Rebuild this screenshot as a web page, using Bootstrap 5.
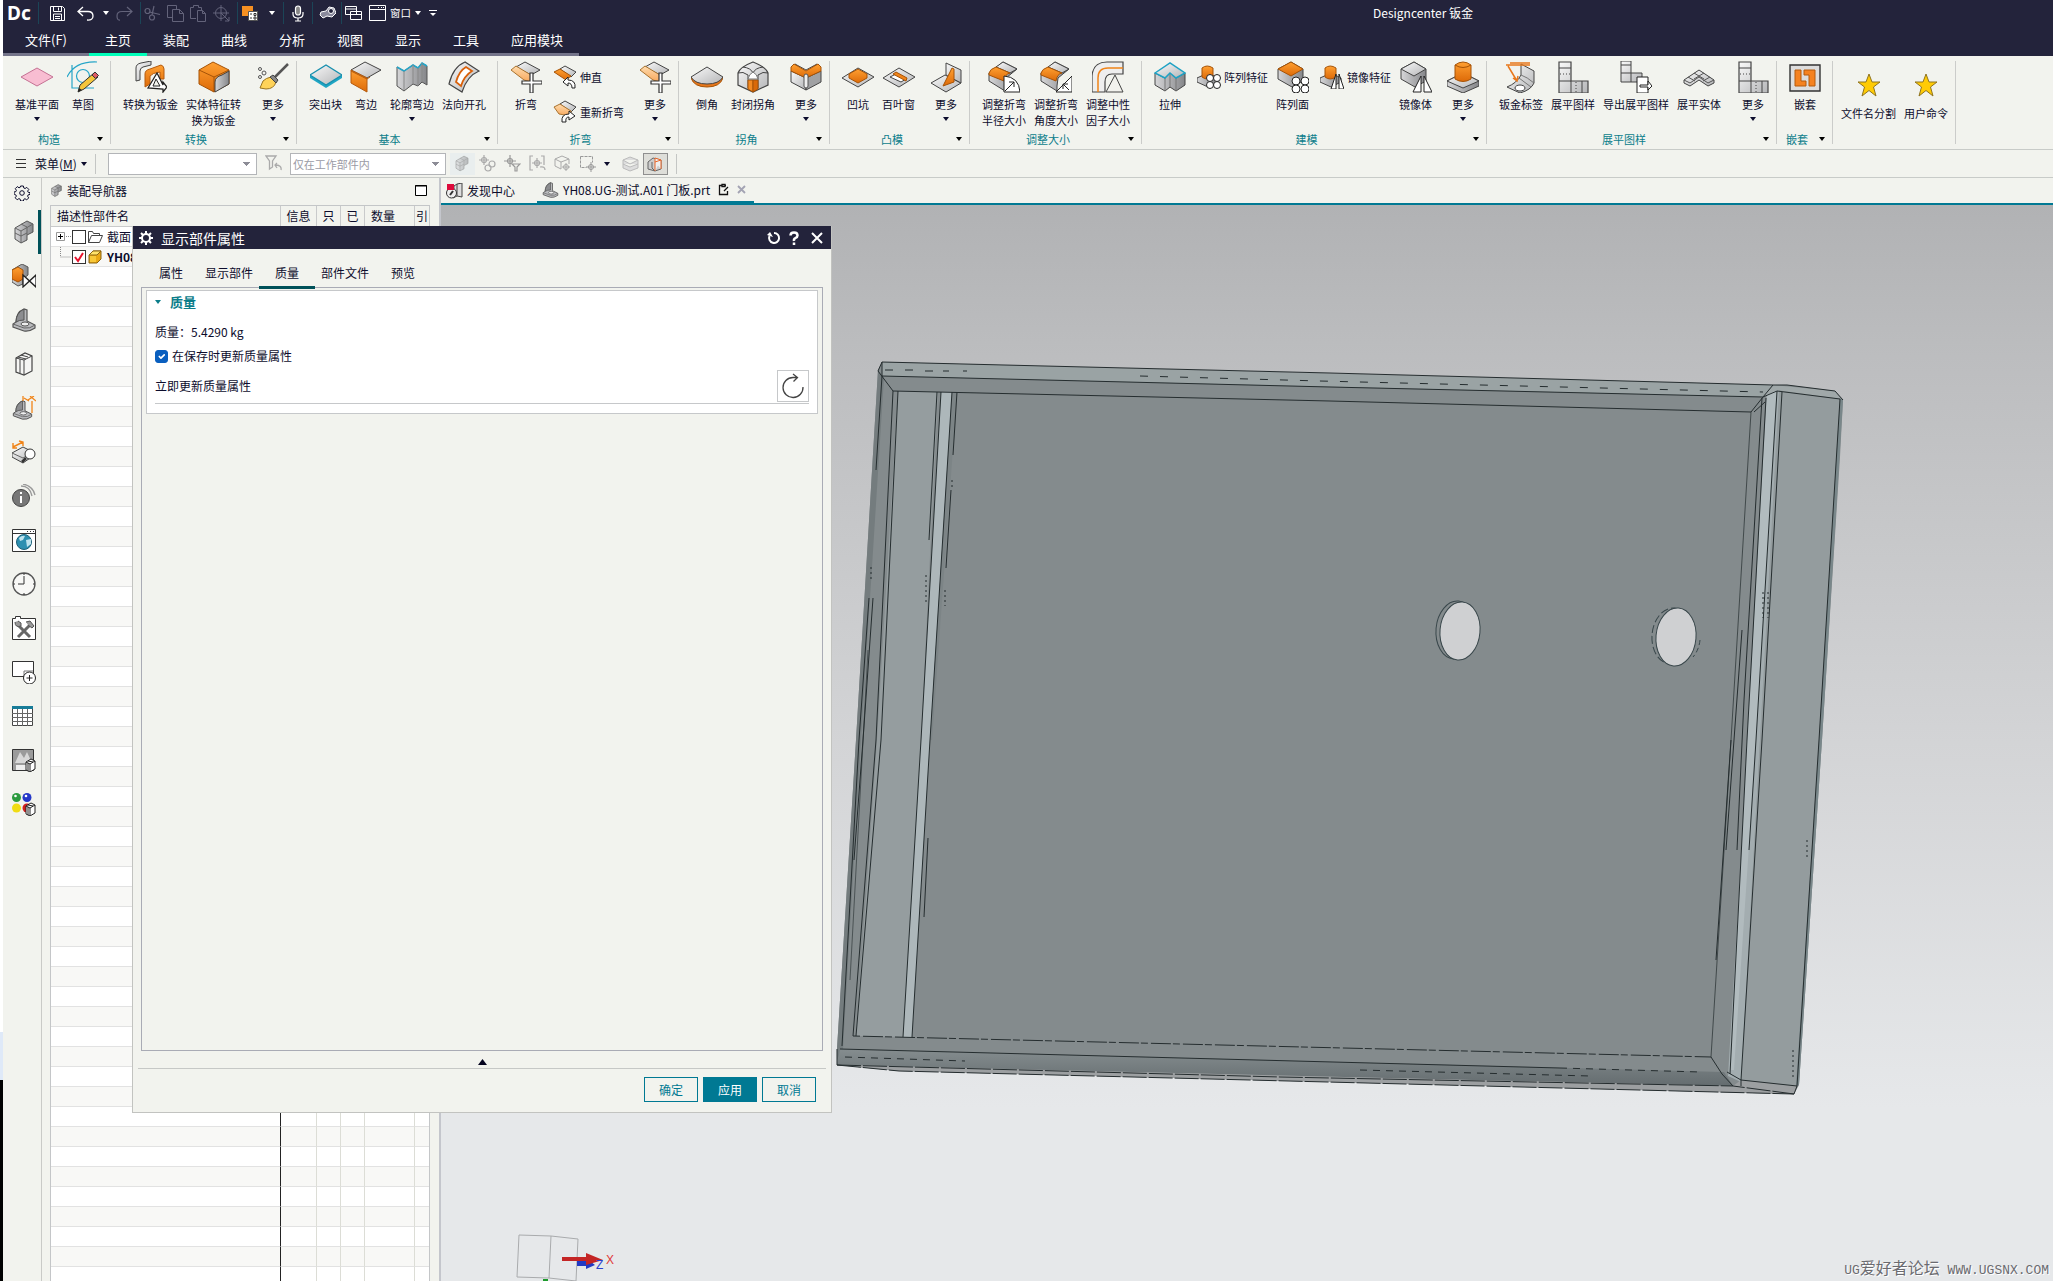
<!DOCTYPE html>
<html lang="zh-CN">
<head>
<meta charset="utf-8">
<meta name="viewport" content="width=device-width, initial-scale=1">
<title>Designcenter 钣金</title>
<link rel="stylesheet" href="https://cdn.jsdelivr.net/npm/bootstrap@5.3.0/dist/css/bootstrap.min.css">
<style>
:root{--navy:#23233b;--teal:#007993;--deep:#005159;--panel:#f2f3ee;--ink:#0c0c2c;--rule:#c8cbc8}
html,body{height:100%}
body{font-family:"Noto Sans CJK SC","Noto Sans",sans-serif;font-size:12px;line-height:16px;color:var(--ink);background:var(--panel);overflow:hidden}
svg{display:block;flex:none}
button{font:inherit;color:inherit;background:none;border:0;padding:0}
.edge{width:3px;background:linear-gradient(#fff 0 1032px,#dfe9f8 1032px 1080px,#000 1080px)}
.tri{display:inline-block;width:0;height:0;border:3px solid transparent;border-top:4px solid currentColor;border-bottom:0;flex:none}
.topbar{background:var(--navy);color:#fff}
.quick{height:26px;padding-left:4px}
.logo{font:700 19px/26px "Noto Sans",sans-serif;width:31px}
.quick .vr-q{width:1px;height:22px;background:#1b4557}
.quick button{height:24px;display:flex;align-items:center;justify-content:center}
.off{color:#63637a}
.q23{width:23px}.q30{width:28px}.q14{width:14px}
.wtitle{left:1370px;top:0;line-height:26px}
.menu-tab{height:30px;padding:0 16px;font-size:13px;color:#fff;border-bottom:3px solid #74748a !important;line-height:28px}
.menu-tab.first-tab{width:86px}
.menu-tab.on{border-bottom-color:#00ffb9 !important}
.ribbon{height:94px;border-bottom:1px solid var(--rule);font-size:11px}
.rgroup{position:relative;display:flex;flex-direction:column;padding:5px 0 0}
.rgroup::after{content:"";position:absolute;right:0;top:5px;bottom:5px;width:1px;background:#cbccca}
.rbody{display:flex;padding:0 8px;height:70px}
.rbody.tight{padding-right:4px}
.rbtn{min-width:40px;padding:0 4px;display:flex;flex-direction:column;align-items:center;text-align:center}
.rbtn svg{margin-bottom:3px}
.rbtn .tri{margin-top:5px}
.more{margin-left:7px}
.more.far{margin-left:8px}
.rsmall{display:flex;align-items:center;gap:3px;padding:0 4px 0 7px;height:31px}
.rlabel{display:flex;align-items:center;height:16px;color:#0b7d8a;font-size:11px}
.rlabel span{flex:1;text-align:center}
.rlabel button{width:16px;color:#000;display:flex;padding-left:2px}
.tools{height:28px;border-bottom:1px solid var(--rule);padding-left:12px}
.combo{appearance:none;height:22px;border:1px solid #b3b5b8;border-radius:0;padding:0 2px;font-size:11px;line-height:18px;color:#9b9ba5;opacity:1;background:linear-gradient(to bottom right,#8c8c96 50%,transparent 50%) right 5px center/4px 4px no-repeat,linear-gradient(to bottom left,#8c8c96 50%,transparent 50%) right 9px center/4px 4px no-repeat,#fff}
.combo.w-type{width:149px;margin-left:12px}.combo.w-scope{width:156px}
.tool{width:25px;height:22px;display:flex;align-items:center;justify-content:center;color:#aaa}
.tool.lit{background:#e9eeee}
.tool.pressed{border:1px solid #8f8f8f;background:#deded9}
.sep{width:1px;height:20px;background:#c4c6c4}
.rail{width:39px;border-right:1px solid #c9cac7;align-items:center;padding-top:3px}
.rail button{height:44px;width:38px;display:flex;align-items:center;justify-content:center;padding-left:4px}
.rail button.gear{height:24px;padding-left:0;margin-bottom:5px}
.rail button.on{box-shadow:inset -3px 0 var(--deep)}
.navp{width:399px;border-right:2px solid #c4c6cc;padding:0 10px 0 8px;overflow:hidden}
.nav-h{height:27px;padding:0 2px 2px 0}
.tree-t{table-layout:fixed;width:380px;border-collapse:separate;border-spacing:0;border:1px solid #c4c6c8;border-width:1px 1px 0}
.tree-t th{height:21px;font-weight:400;padding:0 6px;border-right:1px solid #c9cacb;border-bottom:1px solid #c9cacb;white-space:nowrap;overflow:hidden;background:var(--panel)}
.tree-t th.ctr{text-align:center;padding:0}
.tree-t td{height:20px;padding:0;border-bottom:1px solid #e2e2e2;border-right:1px solid #dcddd6;background:#fff;white-space:nowrap;overflow:hidden}
.tree-t tr:nth-child(even) td{background:#f8f8f6}
.tree-t td:first-child{border-right-color:#222}
.tree-t td:last-child,.tree-t th:last-child{border-right:0}
.tickbox{appearance:none;width:14px;height:14px;border:1px solid #333;background:#fff;margin:0;flex:none}
.plus{width:9px;height:9px;border:1px solid #999}
.doctabs{height:27px;border-bottom:2px solid var(--teal)}
.doctab{height:26px;display:flex;align-items:center;line-height:24px;padding:0 5px;color:var(--ink);text-decoration:none}
.doctab.on{border-bottom:3px solid var(--teal);line-height:22px;margin-left:17px;padding-right:8px}
.scene{background:linear-gradient(#b1b2b4 0,#bcbdbf 14%,#d3d4d6 50%,#e6e8ea 84%);overflow:hidden}
.scene svg{position:absolute;left:0;top:0}
.mark-w{right:4px;bottom:1px;font:13px/18px "Liberation Mono","Noto Sans CJK SC",monospace;color:#6b6b70;text-shadow:1px 1px #fff}
.mark-w b{font:16px/18px "Noto Sans CJK SC",sans-serif}
.dlg{left:129px;top:48px;width:700px;background:var(--panel);border:1px solid #c2c3c0;border-top:0;z-index:5}
.dlg-t{height:23px;background:var(--navy);color:#fff;padding:0 8px 0 6px;font-size:14px;line-height:22px}
.dlg-tabs{height:38px;padding:10px 0 0 15px}
.dlg-tab{padding:0 11px;height:28px;line-height:28px;position:relative;color:var(--ink)}
.dlg-tab.on{line-height:24px}
.dlg-tab.on::after{content:"";position:absolute;left:-5px;right:-5px;bottom:-2px;height:3px;background:var(--deep)}
.frame{margin:0 8px;border:1px solid #a9abb5;min-height:764px;padding:2px 4px}
.sect{background:#fff;border:1px solid #c6c8ca;padding:2px 8px 9px;min-height:122px}
.sect-h{color:#0b7d8a;font-size:13px;line-height:18px;font-weight:700;display:flex;align-items:center;gap:9px;height:18px}
.mass{margin-top:13px}
.keep{min-height:16px;margin:8px 0 4px;padding:0}
.sect .form-check-input{width:13px;height:13px;margin:0;border-radius:3px;float:none}
.form-check-input:checked{background-color:#0a5fbf;border-color:#0a5fbf}
.upd{border-bottom:1px solid #c6c8ca;height:36px}
.refresh{width:32px;height:32px;border:1px solid #c6c8ca !important;display:flex;align-items:center;justify-content:center}
.dlg-f{margin:0 5px;border-top:1px solid #c6c8c6;padding:8px 10px 10px;gap:5px}
.dlg-f .btn{width:54px;height:25px;border:1px solid var(--teal);border-radius:0;padding:0;font-size:12px;line-height:22px;color:var(--teal)}
.dlg-f .btn.prime{background:var(--teal);color:#fff}
</style>
<script src="https://cdn.jsdelivr.net/npm/bootstrap@5.3.0/dist/js/bootstrap.bundle.min.js"></script>
</head>
<body>
<svg width="0" height="0" class="position-absolute" aria-hidden="true">
<defs>
<linearGradient id="o" x1="0" y1="0" x2="0" y2="1"><stop offset="0" stop-color="#ffa032"/><stop offset="1" stop-color="#dd6a08"/></linearGradient>
<linearGradient id="g" x1="0" y1="0" x2="1" y2="1"><stop offset="0" stop-color="#fafafa"/><stop offset="1" stop-color="#b4b5b7"/></linearGradient>
<linearGradient id="d" x1="0" y1="0" x2="1" y2="0"><stop offset="0" stop-color="#d6d6d8"/><stop offset="1" stop-color="#858689"/></linearGradient>
<linearGradient id="lo" x1="0" y1="0" x2="0" y2="1"><stop offset="0" stop-color="#ffdcae"/><stop offset="1" stop-color="#f7a75c"/></linearGradient>
<linearGradient id="mb" x1="0" y1="0" x2="0" y2="1"><stop offset="0" stop-color="#858d8f"/><stop offset="1" stop-color="#646c6f"/></linearGradient>
</defs>
<g stroke-linejoin="round" stroke-linecap="round">
<symbol id="plane" viewBox="0 0 32 32"><path d="M0 16 16 7l16 9-16 9z" fill="#f8bdd2" stroke="#c47193"/></symbol>
<symbol id="sketch" viewBox="0 0 32 32"><g fill="none" stroke="#25a5c8" stroke-width="1.2"><path d="M0 16Q8 0 30 1M5 4v23h22"/><circle cx="16" cy="15" r="6.500"/></g><path d="M11 31l2-7L27 12l4 4-14 12z" fill="#f4c53b" stroke="#333"/><path d="M25 14l3-3 3.500 3.500-3 3z" fill="#dd5b64" stroke="#333"/><path d="M11 31l1-4 3 2z" fill="#222"/></symbol>
<symbol id="conv" viewBox="0 0 32 32"><path d="M1 20V7Q1 3 6 2l10-2v4L8 6Q5 7 5 10v9z" fill="url(#g)" stroke="#444"/><path d="M10 26V13q0-4 5-5l11-4q3 1 3 4v10h-4v-7q-8 1-10 4v8z" fill="url(#o)" stroke="#b55a0c"/><path d="M13 27l9-15 6 12v-3l4 5-4 5v-3z" fill="#fff" stroke="#222" stroke-width="1.300"/><path d="M18 25h7l-4-7z" fill="#f2f3ee" stroke="#222"/></symbol>
<symbol id="solid" viewBox="0 0 32 32"><path d="M1 9 15 1l16 8v14l-15 8-15-8z" fill="url(#o)" stroke="#a65307"/><path d="M1 9l15 7 15-7M16 16v15" fill="none" stroke="#a65307"/><path d="M17 21q0-5 7-7l7-4v13l-14 8z" fill="url(#d)" stroke="#444"/></symbol>
<symbol id="broom" viewBox="0 0 32 32"><path d="M31 3 17 17" stroke="#555" stroke-width="2.500"/><path d="M14 16l5 5q-2 7-10 7l-6-1 3-7q3-3 8-4z" fill="#ffd35a" stroke="#9a7420"/><path d="M13 16l3-2 5 5-2 3z" fill="#888" stroke="#444"/><g fill="none" stroke="#555"><circle cx="3" cy="8" r="1.500"/><circle cx="7" cy="12" r="2"/><circle cx="3" cy="16" r="1.500"/></g></symbol>
<symbol id="slab" viewBox="0 0 32 32"><path d="M0 14v3l16 10 16-10v-3z" fill="#1fa6c4"/><path d="M0 14 16 4l16 10-16 10z" fill="url(#g)" stroke="#168fae" stroke-width="1.300"/></symbol>
<symbol id="flange" viewBox="0 0 32 32"><path d="M15 1l16 8-14 8-16-8z" fill="url(#g)" stroke="#444"/><path d="M1 9l16 8v14L1 22z" fill="url(#o)" stroke="#b55a0c"/><path d="M1 10l16 8 3-2" fill="none" stroke="#b55a0c"/></symbol>
<symbol id="contour" viewBox="0 0 32 32"><path d="M1 6l7 4 9-6 5 3 4-5 5 3v19l-5-3-4 4-5-2-9 7-7-5z" fill="url(#d)" stroke="#555"/><path d="M1 6l7 4 9-6 5 3 4-5 5 3" fill="none" stroke="#25a5c8" stroke-width="1.500"/><path d="M8 10v19M17 4v19M22 7v18M26 2v19" stroke="#888" fill="none"/></symbol>
<symbol id="cutout" viewBox="0 0 32 32"><path d="M1 23Q5 6 17 1l14 9Q19 15 14 31z" fill="url(#g)" stroke="#444" stroke-width="1.200"/><path d="M8 21q3-11 10-15l6 4q-8 5-11 15z" fill="#fff" stroke="#d9600a" stroke-width="1.800"/></symbol>
<symbol id="bend" viewBox="0 0 32 32"><path d="M15 1l15 8-9 5L6 6z" fill="url(#g)" stroke="#444"/><path d="M6 5l15 9v7l-7-2L1 9z" fill="url(#lo)" stroke="#a9732f"/><path d="M20 12h3v8h9v3h-9v9h-3v-9h-8v-3h8z" fill="#fff" stroke="#333" stroke-width="1.200"/></symbol>
<symbol id="unbend" viewBox="0 0 24 24"><path d="M12 1l11 6-5 5L7 4z" fill="url(#g)" stroke="#444"/><path d="M7 4l11 7-5 4L1 7z" fill="url(#o)" stroke="#a65307"/><path d="M22 23q1-8-7-8v-3l-5 5 5 4v-3q4 0 4 5z" fill="#fff" stroke="#222"/></symbol>
<symbol id="rebend" viewBox="0 0 24 24"><path d="M12 1l11 6-5 5L7 4z" fill="url(#g)" stroke="#444"/><path d="M7 4l11 7v5L6 14 1 7z" fill="url(#lo)" stroke="#a9732f"/><path d="M9 22q-1-8 7-8v-3l6 5-6 4v-3q-4 0-3 5z" fill="#fff" stroke="#222"/></symbol>
<symbol id="chamf" viewBox="0 0 32 32"><path d="M0 17q3 9 16 9t16-9l-1-1H1z" fill="#e8771a" stroke="#a65307"/><path d="M0 16 16 6l16 10q-4 7-16 7T0 16z" fill="url(#g)" stroke="#444"/></symbol>
<symbol id="ccorner" viewBox="0 0 32 32"><path d="M1 12Q3 6 16 1q13 5 15 11v12l-15 7-15-7z" fill="url(#g)" stroke="#444" stroke-width="1.200"/><path d="M1 12q5-2 10 2v13M31 12q-5-2-10 2v13M6 6q8 1 10 6M26 6q-8 1-10 6" fill="none" stroke="#444"/><path d="M11 19h5v12l-5-3z" fill="#f38a22" stroke="#a65307"/><path d="M16 19h5v9l-5 3z" fill="#d96908" stroke="#a65307"/><path d="M11 18q1-5 5-7 4 2 5 7z" fill="#fff" stroke="#777"/></symbol>
<symbol id="morec" viewBox="0 0 32 32"><path d="M1 10l15 7v12L1 21z" fill="url(#g)" stroke="#444"/><path d="M31 10l-15 7v12l15-8z" fill="#a0a1a3" stroke="#444"/><path d="M5 3l11 6 11-6-3 5-8 5-8-5z" fill="#eee" stroke="#444"/><path d="M1 6l3-3 12 7 12-7 3 3v4l-15 7-15-7z" fill="url(#o)" stroke="#a65307"/><rect x="14" y="13" width="4" height="14" rx="2" fill="#eee" stroke="#555"/></symbol>
<symbol id="dimple" viewBox="0 0 32 32"><path d="M0 17 16 7l16 9-16 10z" fill="url(#g)" stroke="#444"/><path d="M7 13l9-5 9 5v4l-9 5-9-5z" fill="url(#o)" stroke="#a65307"/></symbol>
<symbol id="louver" viewBox="0 0 32 32"><path d="M0 17 16 7l16 9-16 10z" fill="url(#g)" stroke="#444"/><path d="M7 16l6-3 10 5-5 3z" fill="#fff" stroke="#444"/><path d="M10 13l3-2 11 6-1 3z" fill="#f08419" stroke="#a65307"/></symbol>
<symbol id="gusset" viewBox="0 0 32 32"><path d="M1 22l14-8 16 8-15 9z" fill="url(#g)" stroke="#444"/><path d="M16 2l15 7v13l-15-8z" fill="url(#g)" stroke="#444"/><path d="M13 25 22 7l2 1v13z" fill="url(#o)" stroke="#a65307"/></symbol>
<symbol id="rrad" viewBox="0 0 32 32"><path d="M1 12 15 1l14 7-11 9-1 8 0 5L1 20z" fill="url(#d)" stroke="#444"/><path d="M8 6l7-5 14 7-7 4z" fill="url(#g)" stroke="#444"/><path d="M1 12q1-4 7-6l14 6q-5 1-6 8L1 14z" fill="url(#o)" stroke="#a65307"/><path d="M16 31V15q15 1 16 16z" fill="#fff" stroke="#222"/><path d="M17 30l9-9m-5 0h5v5" fill="none" stroke="#222"/></symbol>
<symbol id="rang" viewBox="0 0 32 32"><path d="M1 12 15 1l14 7-11 9-1 8 0 5L1 20z" fill="url(#d)" stroke="#444"/><path d="M8 6l7-5 14 7-7 4z" fill="url(#g)" stroke="#444"/><path d="M1 12q1-4 7-6l14 6q-5 1-6 8L1 14z" fill="url(#o)" stroke="#a65307"/><path d="M16 31 32 15v16z" fill="#fff" stroke="#222"/><path d="M23 23l6 6m-6-1v-5h5" fill="none" stroke="#222"/></symbol>
<symbol id="neutral" viewBox="0 0 32 32"><path d="M0 31V15Q1 1 15 1h16v12H20q-7 0-7 8v10z" fill="#eee" stroke="#444" stroke-width="1.200"/><path d="M6 31V17Q6 7 16 7h15" fill="none" stroke="#f08419" stroke-width="1.500"/><path d="M14 31l9-17 8 17z" fill="#f2f2ee" stroke="#444"/></symbol>
<symbol id="extr" viewBox="0 0 32 32"><path d="M1 12v12l10 6 5-4 6 4 9-6V12l-9 5-6-5-5 5z" fill="url(#d)" stroke="#444"/><path d="M11 17v13M22 17v13M16 12v14" stroke="#777"/><path d="M1 12 16 2l15 10-9 5-6-5-5 5z" fill="url(#g)" stroke="#1ea2c4" stroke-width="1.500"/></symbol>
<symbol id="pfeat" viewBox="0 0 24 24"><path d="M0 13l11-5 10 5v4l-10 5L0 17z" fill="url(#d)" stroke="#444"/><path d="M5 3q5-4 11 0v9q-6 4-11 0z" fill="url(#o)" stroke="#a65307"/><g fill="#fff" stroke="#222"><circle cx="13" cy="13" r="3.500"/><circle cx="20" cy="13" r="3.500"/><circle cx="13" cy="20" r="3.500"/><circle cx="20" cy="20" r="3.500"/></g></symbol>
<symbol id="pface" viewBox="0 0 32 32"><path d="M1 8 14 1l12 7v12l-11 6L1 18z" fill="url(#d)" stroke="#444"/><path d="M1 8 14 1l12 7-12 7z" fill="url(#o)" stroke="#a65307"/><g fill="#fff" stroke="#222"><circle cx="19" cy="20" r="4"/><circle cx="28" cy="20" r="4"/><circle cx="19" cy="28" r="4"/><circle cx="28" cy="28" r="4"/></g></symbol>
<symbol id="mfeat" viewBox="0 0 24 24"><path d="M0 13l11-5 10 5v4l-10 5L0 17z" fill="url(#d)" stroke="#444"/><path d="M5 3q5-4 11 0v9q-6 4-11 0z" fill="url(#o)" stroke="#a65307"/><path d="M11 24h5V9zM19 9v15h5z" fill="#fff" stroke="#222"/></symbol>
<symbol id="mbody" viewBox="0 0 32 32"><path d="M1 8 14 1l12 7v12l-11 6L1 18z" fill="url(#d)" stroke="#444"/><path d="M1 8 14 1l12 7-12 7z" fill="url(#g)" stroke="#444"/><path d="M13 31h8V15zM24 15v16h8z" fill="#fff" stroke="#222"/></symbol>
<symbol id="boss" viewBox="0 0 32 32"><path d="M0 20l16-8 16 8v5l-16 7-16-7z" fill="url(#d)" stroke="#444"/><path d="M0 20l16-8 16 8-16 7z" fill="url(#g)" stroke="#444"/><path d="M8 4q8-6 16 0v14q-8 5-16 0z" fill="url(#o)" stroke="#a65307"/><path d="M8 4q8 5 16 0" fill="none" stroke="#a65307"/></symbol>
<symbol id="label" viewBox="0 0 32 32"><path d="M16 3l13 7v12q-3 7-14 10L2 26q10-4 14-12z" fill="url(#g)" stroke="#444"/><path d="M16 14q6 2 13 8M14 17l12 9" stroke="#777" fill="none"/><ellipse cx="15" cy="27" rx="5" ry="3" fill="#fff" stroke="#444"/><path d="M5 2h20M1 4h24M3 5l9 15m-4-3l4 3 1-5" fill="none" stroke="#e8771a" stroke-width="1.500"/></symbol>
<symbol id="flat" viewBox="0 0 32 32"><path d="M2 1h12v19h17v12H2z" fill="url(#g)" stroke="#444" stroke-width="1.200"/><path d="M2 7h12M2 20h12v12M25 20v12" fill="none" stroke="#444"/><path d="M3 13h10M19 21v10" stroke="#444" stroke-dasharray="1 2"/></symbol>
<symbol id="eflat" viewBox="0 0 32 32"><path d="M1 0h10v12h11v9H1z" fill="url(#g)" stroke="#444"/><path d="M1 4h10M1 12h10v9" fill="none" stroke="#444"/><path d="M17 16h11v16H17z" fill="#fff" stroke="#222"/><path d="M20 24h8v-4l4 5-4 4v-3h-8z" fill="#fff" stroke="#222"/></symbol>
<symbol id="fsolid" viewBox="0 0 32 32"><path d="M1 19l15-10 15 10v3l-6 3-9-6-9 6-6-3z" fill="url(#g)" stroke="#444"/><path d="M5 16l7 4m-1-8l10 6m0-6-10 6m16-2-7 4M1 19l6 3 9-6 9 6 6-3" fill="none" stroke="#555"/></symbol>
<symbol id="nest" viewBox="0 0 32 32"><path d="M1 4h30v26H1z" fill="#ddd" stroke="#333" stroke-width="1.400"/><path d="M6 9h6v11h5v5H6zM15 9h11v16h-6V14h-5z" fill="#f58220" stroke="#b55a0c"/></symbol>
<symbol id="star" viewBox="0 0 24 24"><path d="M12 1l3 8h8l-6.500 5L19 23l-7-5.500L5 23l2.500-9L1 9h8z" fill="#ffcb05" stroke="#8f7420"/></symbol>
<symbol id="cubes" viewBox="0 0 24 24"><path d="M3 8 15 1l6 3v8l-6 3v5l-6 3-6-4z" fill="url(#d)" stroke="#555"/><path d="M3 8l6 3 12-7M9 11v12M9 4l6 3v8M3 13l6 3 6-3" fill="none" stroke="#666"/></symbol>
<symbol id="cubeo" viewBox="0 0 24 24"><path d="M0 6 10 0l6 3v8l-5 4v5l-5 2-6-4z" fill="url(#d)" stroke="#555"/><path d="M0 6l6-3 5 3v9l-5 3-6-3z" fill="url(#o)" stroke="#a65307"/><path d="M11 11v12l13-12v12z" fill="#fff" stroke="#222" stroke-width="1.300"/></symbol>
<symbol id="bracket" viewBox="0 0 24 24"><path d="M4 14Q4 4 12 1l3 1v11l8 4v3q-6 4-11 3L1 19v-3z" fill="#b9babd" stroke="#555" stroke-width="1.200"/><path d="M4 14Q4 5 12 1v11q-5 0-8 2z" fill="#8c8d90" stroke="#555"/><path d="M1 16l11 4q6 1 11-3" fill="none" stroke="#666"/><ellipse cx="13" cy="16" rx="4" ry="2" fill="#eee" stroke="#555"/></symbol>
<symbol id="bracko" viewBox="0 0 24 24"><use href="#bracket" y="4" width="21" height="20"/><path d="M11 0v5M16 4l6-4m-4 0l6 5M20 5v12M12 2l5 3" stroke="#f08419" stroke-width="1.300" fill="none"/></symbol>
<symbol id="books" viewBox="0 0 24 24"><path d="M4 6l9-5 7 3v15l-8 4-8-3z" fill="#f6f6f4" stroke="#444" stroke-width="1.200"/><path d="M4 6l8 2 8-4M12 8v15M8 7v14M6 5l8 2M9 3l7 2" fill="none" stroke="#444"/></symbol>
<symbol id="meas" viewBox="0 0 24 24"><path d="M0 13l11-6 10 5v4l-10 7L0 17z" fill="url(#g)" stroke="#444"/><path d="M0 13l11 5 10-6" fill="none" stroke="#666"/><circle cx="18" cy="14" r="5" fill="#fff" stroke="#333"/><path d="M14 18l-4 4" stroke="#333" stroke-width="2.500"/><path d="M1 7l10-5M1 3v5h4M7 1l4 1v4" fill="none" stroke="#f08419" stroke-width="1.400"/></symbol>
<symbol id="info" viewBox="0 0 24 24"><circle cx="9" cy="14" r="8.500" fill="#777" stroke="#444"/><path d="M9 12v7M9 8v2" stroke="#fff" stroke-width="2"/><path d="M9 2q9 0 11 10M11 0q10 2 12 11" stroke="#999" fill="none" stroke-width="1.300"/></symbol>
<symbol id="web" viewBox="0 0 24 24"><path d="M.5 1.500h23v22H.500zM0 5.500h24" fill="#fff" stroke="#333"/><circle cx="12" cy="14" r="7.500" fill="#2d8fb0" stroke="#1d6178"/><path d="M7 10q3-3 6-2l-2 4-3 1zM14 12l5-1v5l-4 3z" fill="#bfe3ee"/><path d="M15 3.500h1M18 3.500h1M21 3.500h1" stroke="#333"/></symbol>
<symbol id="clock" viewBox="0 0 24 24"><circle cx="12" cy="12" r="11" fill="#f8f8f6" stroke="#555" stroke-width="1.300"/><path d="M12 4v8H6M12 1v2M12 21v2M1 12h2M21 12h2" stroke="#333" fill="none"/></symbol>
<symbol id="toolsx" viewBox="0 0 24 24"><path d="M.5 23.500V2.500h3v-2h5v2h15v21z" fill="#fff" stroke="#333"/><path d="M6 9l12 12M18 9 6 21" stroke="#666" stroke-width="3"/><path d="M3 6q0 6 6 4V7L6 5M14 6l4-1 4 5-2 2-4-3" stroke="#555" fill="#999"/></symbol>
<symbol id="addw" viewBox="0 0 24 24"><path d="M.5 1.500h21v15H.500z" fill="#fff" stroke="#333"/><path d="M12 16v-5h9" fill="none" stroke="#777"/><circle cx="17.500" cy="18" r="6" fill="#fff" stroke="#222"/><path d="M17.500 15v6M14.500 18h6" stroke="#222"/></symbol>
<symbol id="cal" viewBox="0 0 24 24"><path d="M.5 2.500h20v19h-20z" fill="#fff" stroke="#444"/><path d="M0 2h21v3H0z" fill="#187c98"/><path d="M5.500 5v17M10.500 5v17M15.500 5v17M0 9.500h21M0 13.500h21M0 17.500h21" stroke="#666"/></symbol>
<symbol id="pic" viewBox="0 0 24 24"><path d="M.5 1.500h21v21H.500z" fill="#9b9b9b" stroke="#333"/><path d="M3 15 8 4l4 6 3-6 5 11z" fill="#d8d8d8"/><path d="M4 17h12v5H4z" fill="#eee"/><path d="M14 14l5-3 4 2v8l-5 3-4-2z" fill="#fff" stroke="#222"/><path d="M14 14l4 2 5-3M18 16v8M16 15v8M16 13l5 1" stroke="#222" fill="none"/></symbol>
<symbol id="balls" viewBox="0 0 24 24"><circle cx="4.500" cy="5.500" r="4.500" fill="#2b9a3e"/><circle cx="15" cy="5.500" r="4.500" fill="#2437c8"/><circle cx="4.500" cy="16" r="4.500" fill="#f0dc14"/><circle cx="15" cy="16" r="4.500" fill="#d11f1f"/><circle cx="3.500" cy="4" r="1.300" fill="#fff"/><circle cx="14" cy="4" r="1.300" fill="#fff"/><path d="M14 14l5-3 4 2v8l-5 3-4-2z" fill="#fff" stroke="#222"/><path d="M14 14l4 2 5-3M18 16v8M16 15v8M16 13l5 1" stroke="#222" fill="none"/></symbol>
<symbol id="cog" viewBox="0 0 16 16"><path d="M6.600 1h2.800l.4 2 1.300.5 1.700-1.100 2 2-1.200 1.700.6 1.200 1.800.3v1.800l-1.900.5-.5 1.300 1.100 1.700-2 2-1.700-1.200-1.200.6-.4 1.700H6.600l-.4-1.800-1.300-.6-1.700 1.200-2-2 1.200-1.700-.6-1.200L0 9V7l1.900-.4.5-1.300-1.100-1.700 2-2L5 2.800l1.200-.5z" fill="none" stroke="currentColor"/><circle cx="8" cy="8" r="2.300" fill="none" stroke="currentColor"/></symbol>
</g>
</svg>

<div class="d-flex vh-100">
<div class="edge flex-shrink-0"></div>
<div class="d-flex flex-column flex-grow-1 overflow-hidden">

<header class="topbar position-relative">
 <div class="quick d-flex align-items-center">
  <span class="logo">Dc</span><i class="vr-q"></i>
  <button class="q30 ms-1" aria-label="保存"><svg width="17" height="17" viewBox="0 0 17 17" fill="none" stroke="#fff"><path d="M1.500 1.500h12l2 2v12h-14zM4.500 1.500v5h8v-5M9.500 2.500v3M4.500 15v-6h8v6M6 11.500h5M6 13.500h5"/></svg></button>
  <button class="q30" aria-label="撤销"><svg width="17" height="15" viewBox="0 0 17 15" fill="none" stroke="#fff" stroke-width="1.300"><path d="M6 1 1 5.500 6 10M1 5.500h10q5 0 5 4.500t-6 4"/></svg></button>
  <button class="q14" aria-label="撤销列表"><i class="tri"></i></button>
  <button class="q23 off" aria-label="重做"><svg width="17" height="15" viewBox="0 0 17 15" fill="none" stroke="currentColor" stroke-width="1.200"><path d="M11 1l5 4.500-5 4.500M16 5.500H6q-5 0-5 4.500t3 4"/></svg></button>
  <i class="vr-q ms-1"></i>
  <button class="q23 off" aria-label="剪切"><svg width="17" height="16" viewBox="0 0 17 16" fill="none" stroke="currentColor" stroke-width="1.200"><circle cx="3.500" cy="6" r="2.500"/><circle cx="8" cy="12.500" r="2.500"/><path d="M5.500 7 16 9.500M8 10l2-9"/></svg></button>
  <button class="q23 off" aria-label="复制"><svg width="17" height="17" viewBox="0 0 17 17" fill="none" stroke="currentColor"><path d="M5 12.500H.500V.500h9V4M5.500 4.500h7l4 4v8h-11zM12.500 4.500v4h4"/></svg></button>
  <button class="q23 off" aria-label="粘贴"><svg width="17" height="17" viewBox="0 0 17 17" fill="none" stroke="currentColor"><path d="M6 13.500H.500v-11h3v-2h5v2h3V5M7.500 5.500h5l3 3v8h-8zM12.500 5.500v3h3"/></svg></button>
  <button class="q23 off" aria-label="移动对象"><svg width="17" height="17" viewBox="0 0 17 17" fill="none" stroke="currentColor"><circle cx="8" cy="8" r="5.500"/><path d="M8 0v16M0 8h16M8 8l8 8m0-4v4h-4"/></svg></button>
  <i class="vr-q ms-1"></i>
  <button class="q23" aria-label="命令"><svg width="17" height="17" viewBox="0 0 17 17"><path d="M1 1h11v10H1z" fill="#f79022"/><path d="M7.500 6.500h9v9h-9z" fill="#fff" stroke="#555"/><path d="M9 9h2M9 13h2M13 8.500h2v2h-2zM13 12h2v2h-2z" stroke="#333" fill="none"/></svg></button>
  <button class="q14 ms-1" aria-label="命令列表"><i class="tri"></i></button>
  <i class="vr-q ms-1"></i>
  <button class="q30" aria-label="语音"><svg width="12" height="17" viewBox="0 0 12 17" fill="none" stroke="#fff" stroke-width="1.200"><rect x="3.500" y="1" width="5" height="9" rx="2.500" fill="#888"/><path d="M1 7v2q0 4 5 4t5-4V7M6 13v3M3 16h6"/></svg></button>
  <i class="vr-q"></i>
  <button class="q30" aria-label="触控"><svg width="17" height="14" viewBox="0 0 17 14" fill="#8a8a9c" stroke="#fff"><path d="M1 9l3 3 4-2 5 1 4-4-2-5-5-1-3 4-5 1z"/><circle cx="12" cy="5" r="2.500" fill="#23233b"/></svg></button>
  <i class="vr-q"></i>
  <button class="q23" aria-label="层叠"><svg width="17" height="16" viewBox="0 0 17 16" fill="#23233b" stroke="#fff"><path d="M.5 1.500h11v8H.500zM.500 4h11M5.500 6.500h11v8h-11zM5.500 9.500h11"/></svg></button>
  <button class="ms-1"><svg width="17" height="16" viewBox="0 0 17 16" fill="none" stroke="#fff"><path d="M.5.500h16v15H.500zM.500 4.500h16M9 2.500h1M12 2.500h1M14 2.500h1"/></svg><small class="ms-1">窗口</small><i class="tri ms-1"></i></button>
  <button class="q23" aria-label="自定义"><svg width="8" height="7" viewBox="0 0 8 7"><path d="M0 .500h8" stroke="#fff"/><path d="M1 3h6L4 6z" fill="#fff"/></svg></button>
 </div>
 <span class="wtitle position-absolute">Designcenter 钣金</span>
 <nav class="d-flex">
  <button class="menu-tab first-tab">文件(F)</button><button class="menu-tab on">主页</button><button class="menu-tab">装配</button><button class="menu-tab">曲线</button><button class="menu-tab">分析</button><button class="menu-tab">视图</button><button class="menu-tab">显示</button><button class="menu-tab">工具</button><button class="menu-tab">应用模块</button>
 </nav>
</header>

<section class="ribbon d-flex flex-shrink-0">
 <div class="rgroup"><div class="rbody">
  <button class="rbtn"><svg width="32" height="32"><use href="#plane"/></svg>基准平面<i class="tri"></i></button>
  <button class="rbtn"><svg width="32" height="32"><use href="#sketch"/></svg>草图</button></div>
  <div class="rlabel"><span>构造</span><button aria-label="构造选项"><i class="tri"></i></button></div></div>
 <div class="rgroup"><div class="rbody tight">
  <button class="rbtn"><svg width="32" height="32"><use href="#conv"/></svg>转换为钣金</button>
  <button class="rbtn"><svg width="32" height="32"><use href="#solid"/></svg>实体特征转<br>换为钣金</button>
  <button class="rbtn more far"><svg width="32" height="32"><use href="#broom"/></svg>更多<i class="tri"></i></button></div>
  <div class="rlabel"><span>转换</span><button aria-label="转换选项"><i class="tri"></i></button></div></div>
 <div class="rgroup"><div class="rbody">
  <button class="rbtn"><svg width="32" height="32"><use href="#slab"/></svg>突出块</button>
  <button class="rbtn"><svg width="32" height="32"><use href="#flange"/></svg>弯边</button>
  <button class="rbtn"><svg width="32" height="32"><use href="#contour"/></svg>轮廓弯边<i class="tri"></i></button>
  <button class="rbtn"><svg width="32" height="32"><use href="#cutout"/></svg>法向开孔</button></div>
  <div class="rlabel"><span>基本</span><button aria-label="基本选项"><i class="tri"></i></button></div></div>
 <div class="rgroup"><div class="rbody tight">
  <button class="rbtn"><svg width="32" height="32"><use href="#bend"/></svg>折弯</button>
  <div class="d-flex flex-column gap-1"><button class="rsmall"><svg width="24" height="24"><use href="#unbend"/></svg>伸直</button>
  <button class="rsmall"><svg width="24" height="24"><use href="#rebend"/></svg>重新折弯</button></div>
  <button class="rbtn more"><svg width="32" height="32"><use href="#bend"/></svg>更多<i class="tri"></i></button></div>
  <div class="rlabel"><span>折弯</span><button aria-label="折弯选项"><i class="tri"></i></button></div></div>
 <div class="rgroup"><div class="rbody tight">
  <button class="rbtn"><svg width="32" height="32"><use href="#chamf"/></svg>倒角</button>
  <button class="rbtn"><svg width="32" height="32"><use href="#ccorner"/></svg>封闭拐角</button>
  <button class="rbtn more"><svg width="32" height="32"><use href="#morec"/></svg>更多<i class="tri"></i></button></div>
  <div class="rlabel"><span>拐角</span><button aria-label="拐角选项"><i class="tri"></i></button></div></div>
 <div class="rgroup"><div class="rbody tight">
  <button class="rbtn"><svg width="32" height="32"><use href="#dimple"/></svg>凹坑</button>
  <button class="rbtn"><svg width="32" height="32"><use href="#louver"/></svg>百叶窗</button>
  <button class="rbtn more"><svg width="32" height="32"><use href="#gusset"/></svg>更多<i class="tri"></i></button></div>
  <div class="rlabel"><span>凸模</span><button aria-label="凸模选项"><i class="tri"></i></button></div></div>
 <div class="rgroup"><div class="rbody">
  <button class="rbtn"><svg width="32" height="32"><use href="#rrad"/></svg>调整折弯<br>半径大小</button>
  <button class="rbtn"><svg width="32" height="32"><use href="#rang"/></svg>调整折弯<br>角度大小</button>
  <button class="rbtn"><svg width="32" height="32"><use href="#neutral"/></svg>调整中性<br>因子大小</button></div>
  <div class="rlabel"><span>调整大小</span><button aria-label="调整大小选项"><i class="tri"></i></button></div></div>
 <div class="rgroup"><div class="rbody tight">
  <button class="rbtn"><svg width="32" height="32"><use href="#extr"/></svg>拉伸</button>
  <button class="rsmall"><svg width="24" height="24"><use href="#pfeat"/></svg>阵列特征</button>
  <button class="rbtn"><svg width="32" height="32"><use href="#pface"/></svg>阵列面</button>
  <button class="rsmall"><svg width="24" height="24"><use href="#mfeat"/></svg>镜像特征</button>
  <button class="rbtn"><svg width="32" height="32"><use href="#mbody"/></svg>镜像体</button>
  <button class="rbtn more"><svg width="32" height="32"><use href="#boss"/></svg>更多<i class="tri"></i></button></div>
  <div class="rlabel"><span>建模</span><button aria-label="建模选项"><i class="tri"></i></button></div></div>
 <div class="rgroup"><div class="rbody tight">
  <button class="rbtn"><svg width="32" height="32"><use href="#label"/></svg>钣金标签</button>
  <button class="rbtn"><svg width="32" height="32"><use href="#flat"/></svg>展平图样</button>
  <button class="rbtn"><svg width="32" height="32"><use href="#eflat"/></svg>导出展平图样</button>
  <button class="rbtn"><svg width="32" height="32"><use href="#fsolid"/></svg>展平实体</button>
  <button class="rbtn more far"><svg width="32" height="32"><use href="#flat"/></svg>更多<i class="tri"></i></button></div>
  <div class="rlabel"><span>展平图样</span><button aria-label="展平图样选项"><i class="tri"></i></button></div></div>
 <div class="rgroup"><div class="rbody">
  <button class="rbtn"><svg width="32" height="32"><use href="#nest"/></svg>嵌套</button></div>
  <div class="rlabel"><span>嵌套</span><button aria-label="嵌套选项"><i class="tri"></i></button></div></div>
 <div class="rgroup"><div class="rbody px-1 pt-2">
  <button class="rbtn pt-1"><svg width="24" height="24" class="mb-2"><use href="#star"/></svg>文件名分割</button>
  <button class="rbtn pt-1"><svg width="24" height="24" class="mb-2"><use href="#star"/></svg>用户命令</button></div></div>
</section>

<section class="tools d-flex align-items-center flex-shrink-0">
 <button class="d-flex align-items-center"><svg width="12" height="11" viewBox="0 0 12 11" class="me-1"><path d="M1 1.500h10M1 5.500h10M1 9.500h10" stroke="#333"/></svg><span class="ms-1">菜单(<u>M</u>)</span><i class="tri ms-1"></i></button>
 <i class="sep ms-2"></i>
 <select class="combo w-type" aria-label="类型过滤器"><option></option></select>
 <button class="tool mx-1" aria-label="过滤"><svg width="17" height="17" viewBox="0 0 17 17" fill="none" stroke="#aaa" stroke-width="1.300"><path d="M1 1h10L7.500 6v6l-3 2V6zM16 15q1-5-6-5m2-2-2 2 2 3"/></svg></button>
 <select class="combo w-scope" aria-label="选择范围" disabled><option>仅在工作部件内</option></select>
 <button class="tool lit ms-1" aria-label="组件"><svg width="16" height="17" opacity=".5"><use href="#cubes"/></svg></button>
 <button class="tool" aria-label="链接"><svg width="17" height="17" viewBox="0 0 17 17" fill="none" stroke="#aaa" stroke-width="1.200"><circle cx="5" cy="5" r="2.500"/><path d="M5 0v10M0 5h10"/><circle cx="13" cy="9" r="3"/><circle cx="9" cy="13" r="3"/></svg></button>
 <button class="tool" aria-label="点过滤"><svg width="17" height="17" viewBox="0 0 17 17" fill="none" stroke="#999" stroke-width="1.200"><circle cx="6" cy="6" r="2.500"/><path d="M6 0v12M0 6h12M8 9h8l-3 3v4h-2v-4z"/></svg></button>
 <button class="tool" aria-label="范围"><svg width="17" height="17" viewBox="0 0 17 17" fill="none" stroke="#aaa" stroke-width="1.200"><path d="M4 1H1v14h3M12 1h3v9M8 3v10M3 8h10M16 15q0-4-5-3"/><circle cx="8" cy="8" r="2.500"/></svg></button>
 <button class="tool" aria-label="体"><svg width="17" height="17" viewBox="0 0 17 17" fill="none" stroke="#aaa"><path d="M1 4l7-3 7 3v5M1 4v7l6 3V7L1 4m6 3 8-3"/><circle cx="12" cy="12" r="2.500"/><path d="M12 8v8M8 12h8"/></svg></button>
 <button class="tool" aria-label="框选"><svg width="17" height="17" viewBox="0 0 17 17" fill="none" stroke="#999"><path d="M1.500 1.500h12v6M1.500 1.500v11h6" stroke-dasharray="3 1"/><circle cx="12" cy="12" r="2.500"/><path d="M12 7v10M7 12h10"/></svg></button>
 <i class="tri mx-1"></i>
 <button class="tool ms-1" aria-label="着色"><svg width="17" height="16" viewBox="0 0 17 16" fill="#ddd" stroke="#bbb"><path d="M1 4l7-3 8 3v8l-8 3-7-3zM1 4l7 4 8-4M1 8l7 3 8-3"/></svg></button>
 <button class="tool pressed" aria-label="剖切"><svg width="16" height="16" viewBox="0 0 16 16" fill="#ccc" stroke="#666"><path d="M1 6l5-4 8 2v9l-6 2-7-2z"/><path d="M5 6v6l3 3" fill="none"/><path d="M8 15V6l6-2M8 6V2l6 2v9" fill="#eee" stroke="#e8672a"/></svg></button>
 <i class="sep ms-2"></i>
</section>

<main class="d-flex flex-grow-1 position-relative overflow-hidden">
 <aside class="rail d-flex flex-column flex-shrink-0">
  <button class="gear" aria-label="设置"><svg width="16" height="16"><use href="#cog"/></svg></button>
  <button class="on" aria-label="装配导航器"><svg width="24" height="24"><use href="#cubes"/></svg></button>
  <button aria-label="约束导航器"><svg width="24" height="24"><use href="#cubeo"/></svg></button>
  <button aria-label="部件导航器"><svg width="24" height="24"><use href="#bracket"/></svg></button>
  <button aria-label="重用库"><svg width="24" height="24"><use href="#books"/></svg></button>
  <button aria-label="PMI"><svg width="24" height="24"><use href="#bracko"/></svg></button>
  <button aria-label="测量"><svg width="24" height="24"><use href="#meas"/></svg></button>
  <button aria-label="信息"><svg width="24" height="24"><use href="#info"/></svg></button>
  <button aria-label="浏览器"><svg width="24" height="24"><use href="#web"/></svg></button>
  <button aria-label="历史记录"><svg width="24" height="24"><use href="#clock"/></svg></button>
  <button aria-label="加工向导"><svg width="24" height="24"><use href="#toolsx"/></svg></button>
  <button aria-label="新建窗口"><svg width="24" height="24"><use href="#addw"/></svg></button>
  <button aria-label="表格"><svg width="24" height="24"><use href="#cal"/></svg></button>
  <button aria-label="场景"><svg width="24" height="24"><use href="#pic"/></svg></button>
  <button aria-label="角色"><svg width="24" height="24"><use href="#balls"/></svg></button>
 </aside>

 <section class="navp flex-shrink-0">
  <div class="nav-h d-flex align-items-center"><svg width="13" height="15" class="me-1"><use href="#cubes"/></svg><span class="flex-grow-1">装配导航器</span><button aria-label="最大化"><svg width="12" height="11" viewBox="0 0 12 11"><path d="M.5.500h11v10H.500zM0 1h12" fill="#fff" stroke="#000"/></svg></button></div>
  <table class="tree-t">
   <colgroup><col style="width:230px"><col style="width:36px"><col style="width:24px"><col style="width:24px"><col style="width:50px"><col></colgroup>
   <thead><tr><th>描述性部件名</th><th class="ctr">信息</th><th class="ctr">只</th><th class="ctr">已</th><th>数量</th><th class="ctr">引</th></tr></thead>
   <tbody id="rows">
    <tr><td><label class="d-flex align-items-center ps-1"><svg width="17" height="9" viewBox="0 0 17 9"><path d="M1.500.500h8v8h-8z" fill="#fff" stroke="#999"/><path d="M3 4.500h5M5.500 2v5" stroke="#000"/><path d="M11 4.500h5" stroke="#888" stroke-dasharray="1 1"/></svg><input type="checkbox" class="tickbox"><svg width="17" height="13" viewBox="0 0 17 13"><path d="M2.500 12.500v-11h4l1 2h6v2M2.500 12.500l3-7h11l-3 7z" fill="#fff" stroke="#444"/></svg><span class="ms-1">截面</span></label></td><td></td><td></td><td></td><td></td><td></td></tr>
    <tr><td><label class="d-flex align-items-center ps-1"><svg width="17" height="19" viewBox="0 0 17 19"><path d="M5.500 0v10H16" fill="none" stroke="#888" stroke-dasharray="1 1"/></svg><span class="position-relative"><input type="checkbox" checked class="tickbox d-block"><svg width="14" height="14" viewBox="0 0 14 14" class="position-absolute top-0 start-0"><path d="M3 7l3 4 5-8" fill="none" stroke="#e8112d" stroke-width="2"/></svg></span><svg width="17" height="14" viewBox="0 0 17 14"><path d="M3 5l4-4h8v8l-4 4H3z" fill="#e9a815" stroke="#8a6412"/><path d="M3 5l4-4h8l-4 4z" fill="#ffe36a" stroke="#8a6412"/><path d="M4 6h6v6H4z" fill="#f8c838"/></svg><b class="ms-1">YH08</b></label></td><td></td><td></td><td></td><td></td><td></td></tr>
   </tbody>
  </table>
 </section>

 <section class="d-flex flex-column flex-grow-1">
  <nav class="doctabs d-flex flex-shrink-0">
   <a href="#" class="doctab"><svg width="17" height="16" viewBox="0 0 17 16" class="me-1"><path d="M8 3l3-2 5-1v14l-5-1-4 2z" fill="#ddd" stroke="#444"/><path d="M11 1v12" stroke="#444"/><circle cx="5.500" cy="10" r="5" fill="#eee" stroke="#333"/><path d="M1 1h7v6H1z" fill="#dd0b3c"/><path d="M4 12l3-4" stroke="#333" stroke-width="2"/></svg>发现中心</a>
   <a href="#" class="doctab on"><svg width="17" height="16" class="me-1"><use href="#bracket"/></svg>YH08.UG-测试.A01 门板.prt<svg width="11" height="13" viewBox="0 0 11 13" class="ms-2"><path d="M9.500 8v3.500h-8v-9h3M7 2.500h1M4 1.500h3v2H4zM6 8l4-4" fill="none" stroke="#111" stroke-width="1.300"/></svg><svg width="9" height="9" viewBox="0 0 9 9" class="ms-2"><path d="M1 1l7 7M8 1 1 8" stroke="#a3a3b3" stroke-width="1.800"/></svg></a>
  </nav>
  <div class="scene flex-grow-1 position-relative">
   <svg width="1612" height="1076" viewBox="441 205 1612 1076">
    <path d="M882 362 1773 385 1787 385 1835 391 1843 400 1840 457 1822 740 1799 1085 1794 1094 899 1071 837 1065 837 1049 856 740 878 370z" fill="#848b8d"/>
    <path d="M882 362 1773 385 1763 397 882 376z" fill="#9aa3a4"/>
    <path d="M878 370 884 378 861 740 843 1049 837 1060 837 1049 856 740z" fill="#747c7e"/>
    <path d="M898 391 938 392 921 740 903 1037 856 1036 877 740z" fill="#959d9f"/>
    <path d="M941 392h11L930 740 912 1037h-9L921 740z" fill="#adb7ba"/>
    <path d="M952 392h5L932 740h-2z" fill="#7c8486"/>
    <path d="M840 1049 1724 1072 1733 1086 837 1065z" fill="url(#mb)"/>
    <path d="M837 1065 1733 1086 1741 1080 1797 1086 1794 1094 899 1071z" fill="#9c9fa1"/>
    <path d="M1776 390 1840 399 1819 740 1797 1086 1741 1080 1760 740z" fill="#949c9e"/>
    <path d="M1767 393 1779 390 1760 740 1741 1082 1728 1076 1741 860 1747 740z" fill="#a3adb0"/>
    <path d="M1767 393 1777 390 1756 740 1748 860 1734 1070 1730 1070 1741 860 1747 740z" fill="#b1bbbe"/>
    <path d="M1763 397 1773 385 1835 391 1841 399 1777 390z" fill="#a0a8a9"/>
    <path d="M1840 398 1843 400 1822 740 1799 1085 1796 1086 1819 740z" fill="#79878a"/>
    <g fill="none" stroke="#252d2f" stroke-width="1">
     <path d="M882 362 1330 373 1773 385 1787 385 1835 391 1843 400M882 376 1330 387 1763 397M893 391 1330 401 1751 412"/>
     <path d="M885 370h10M905 370h13M925 371h8M943 371h6M963 371h4M1140 376l180 5 443 11" stroke-dasharray="8 12"/>
     <path d="M878 371 893 391M878 371 882 362V376M1751 412 1763 397 1773 385M1763 397 1777 391 1840 399M1765 402 1754 412"/>
     <path d="M882 376 876 470M893 391 876 740 853 1036M898 391 881 740 856 1036M941 392 921 740 903 1037M937 392 929 540M952 392 930 740 912 1037M957 392 953 455M869 598 859 740 842 1046M873 598 863 740 854 860"/>
     <path d="M853 1036 1711 1057" stroke-dasharray="7 3 20 2"/>
     <path d="M840 1049 1560 1068"/><path d="M1560 1068l140 4" stroke-dasharray="7 6"/>
     <path d="M845 1057l120 4M1360 1070l230 6" stroke-dasharray="7 6"/>
     <path d="M837 1065 1280 1077 1733 1086 1794 1094M837 1065 899 1071 1794 1094" stroke-dasharray="24 2"/>
     <path d="M837 1049v16"/>
     <path d="M1762 398 1744 700 1737 850M1766 398 1747 740 1730 1074M1777 391 1756 740 1749 850M1782 392 1762 740 1741 1080"/>
     <path d="M1840 399 1819 740 1797 1086 1794 1094M1727 1072 1741 1080 1797 1086M1741 1080V1086M1711 1057 1722 1074 1733 1086"/>
     <path d="M1751 412 1731 740 1711 1057" opacity=".7"/>
     <path d="M1731 740 1716 960M1742 630 1726 850M928 838 924 917M951 490 946 568"/>
     <path d="M1763 592v26M1768 592v26M1807 840v20M1793 1050v30M871 567v12M926 575v30M945 590v16M952 480v10" stroke-dasharray="2 3"/>
     <path d="M868 650 850 980" opacity=".6"/>
    </g>
    <g stroke="#39474b" fill="none"><ellipse cx="1456" cy="630" rx="20" ry="29" transform="rotate(5 1456 630)"/><ellipse cx="1672" cy="636" rx="20" ry="28" transform="rotate(5 1672 636)" stroke-dasharray="8 3"/><path d="M1700 640q-1 10-7 17" stroke-dasharray="5 3"/></g>
    <ellipse cx="1460" cy="631" rx="20" ry="29" transform="rotate(5 1460 631)" fill="#cfd0d2" stroke="#39474b"/>
    <ellipse cx="1676" cy="637" rx="20" ry="29" transform="rotate(5 1676 637)" fill="#cfd0d2" stroke="#39474b"/>
    <g fill="none" stroke="#a9abad"><path d="M519 1235 551 1236 578 1239 576 1281M519 1235 517 1277 549 1278 576 1281M551 1236 549 1278"/></g>
    <path d="M577 1261h9v-3l9 7-9 4v-3h-9z" fill="#2239c4"/><path d="M562 1257h24v-4l17 7-17 5v-4h-24z" fill="#c42525"/><path d="M543 1279h5v2h-5z" fill="#1c9a2c"/>
    <text x="606" y="1264" font-family="Liberation Sans,sans-serif" font-size="12" fill="#e03a3a">X</text><text x="596" y="1269" font-family="Liberation Sans,sans-serif" font-size="12" fill="#2a3fd0">Z</text>
   </svg>
   <span class="mark-w position-absolute">UG<b>爱好者论坛</b> WWW.UGSNX.COM</span>
  </div>
 </section>

 <section class="dlg position-absolute" role="dialog" aria-label="显示部件属性">
  <div class="dlg-t d-flex align-items-center"><svg width="14" height="14" viewBox="0 0 14 14"><circle cx="7" cy="7" r="4" fill="none" stroke="#fff" stroke-width="2"/><path d="M7 0v3M7 11v3M0 7h3M11 7h3M2 2l2 2M10 10l2 2M12 2l-2 2M2 12l2-2" stroke="#fff" stroke-width="2"/></svg><span class="ms-2 flex-grow-1">显示部件属性</span>
   <button aria-label="重置"><svg width="14" height="14" viewBox="0 0 14 14"><path d="M7 2a5 5 0 1 1-4.500 3" fill="none" stroke="#fff" stroke-width="2"/><path d="M0 4l3-3 3 5z" fill="#fff"/></svg></button>
   <button class="ms-2" aria-label="帮助"><svg width="10" height="14" viewBox="0 0 10 14" fill="none" stroke="#fff" stroke-width="2.500"><path d="M1.500 4.500q0-3 3.500-3t3.500 3q0 1.500-2 2.500T5 10M5 11.500V14"/></svg></button>
   <button class="ms-2 ps-1" aria-label="关闭"><svg width="12" height="12" viewBox="0 0 12 12"><path d="M1 1l10 10M11 1 1 11" stroke="#fff" stroke-width="2"/></svg></button></div>
  <div class="dlg-tabs d-flex"><button class="dlg-tab">属性</button><button class="dlg-tab">显示部件</button><button class="dlg-tab on">质量</button><button class="dlg-tab">部件文件</button><button class="dlg-tab">预览</button></div>
  <div class="frame"><div class="sect">
   <div class="sect-h"><i class="tri"></i>质量</div>
   <div class="mass">质量：5.4290 kg</div>
   <div class="form-check keep d-flex align-items-center gap-1"><input class="form-check-input" type="checkbox" id="upd" checked><label for="upd">在保存时更新质量属性</label></div>
   <div class="upd d-flex align-items-center justify-content-between"><span>立即更新质量属性</span><button class="refresh" aria-label="立即更新质量属性"><svg width="22" height="26" viewBox="0 0 22 26" fill="none" stroke="#444" stroke-width="1.300"><path d="M21 14a10 10 0 1 1-10-9.500h4M11 1l4.500 3.500-4 4"/></svg></button></div>
  </div></div>
  <div class="d-flex justify-content-center pt-2"><button aria-label="收起"><svg width="9" height="9" viewBox="0 0 9 9"><path d="M0 6 4.500 0 9 6z" fill="#04041f"/></svg></button></div>
  <div class="dlg-f d-flex justify-content-end"><button class="btn">确定</button><button class="btn prime">应用</button><button class="btn">取消</button></div>
 </section>
</main>
</div>
</div>
<script>
const rows = document.getElementById('rows');
for (let i = 0; i < 51; i++) rows.insertAdjacentHTML('beforeend', '<tr>' + '<td></td>'.repeat(6) + '</tr>');
</script>
</body>
</html>
